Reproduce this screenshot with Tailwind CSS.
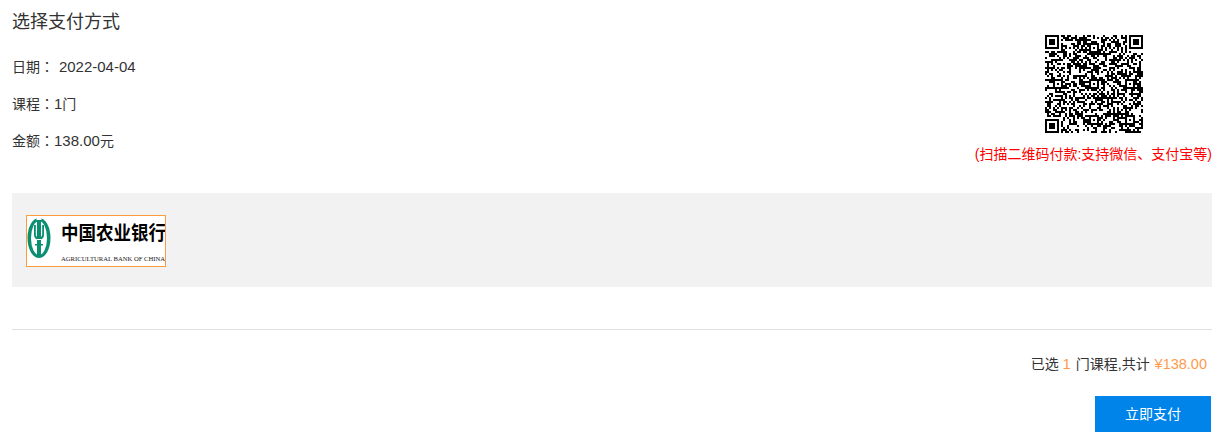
<!DOCTYPE html>
<html lang="zh-CN">
<head>
    <meta charset="UTF-8">
    <title>选择支付方式</title>
    <script src="https://cdn.jsdelivr.net/npm/@tailwindcss/browser@4"></script>
</head>
<body class="bg-white text-[#333] text-sm font-['Liberation_Sans','Noto_Sans_CJK_SC',sans-serif] overflow-hidden">
    <div class="w-[1200px] ml-3">
        <div class="flex justify-between h-[193px]">
            <div>
                <h2 class="text-lg leading-[26px] mt-[9px] mb-[21px]">选择支付方式</h2>
                <p class="h-5 leading-5 mb-[17px]">日期<span lang="zh-TW" class="font-['Noto_Sans_CJK_TC']">：</span> <span class="text-[15px] leading-none ml-px">2022-04-04</span></p>
                <p class="h-5 leading-5 mb-[17px]">课程<span lang="zh-TW" class="font-['Noto_Sans_CJK_TC']">：</span><span class="text-[15px] leading-none">1</span>门</p>
                <p class="h-5 leading-5">金额<span lang="zh-TW" class="font-['Noto_Sans_CJK_TC']">：</span><span class="text-[15px] leading-none">138.00</span>元</p>
            </div>
            <div class="flex flex-col items-center">
                <svg id="qr" class="w-[98px] h-[98px] mt-[35px] ml-px" viewBox="0 0 49 49" shape-rendering="crispEdges"></svg>
                <p class="text-[#f00] leading-5 mt-[11px] whitespace-nowrap">(扫描二维码付款:支持微信、支付宝等)</p>
            </div>
        </div>

        <div class="bg-[#f2f2f2] h-[94px] flex items-center pl-[14px] pt-[2px]">
            <div class="w-[140px] h-[52px] bg-white border border-[#ff9a3d] flex items-start overflow-hidden">
                <svg class="w-6 h-10 mt-[2px] shrink-0" viewBox="0 0 24 40">
                    <ellipse cx="12" cy="20" rx="11.5" ry="20" fill="#0a8f72"/>
                    <ellipse cx="12" cy="20" rx="8" ry="17" fill="#fff"/>
                    <path d="M9.5 0h5v2h-5z" fill="#fff"/>
                    <path d="M7 7h1.8v9a3 3 0 0 0 6.4 0V7H17v10a5 5 0 0 1-10 0z" fill="#0a8f72"/>
                    <rect x="10" y="2" width="4" height="36" fill="#0a8f72"/>
                    <rect x="10" y="21" width="4" height="1" fill="#fff"/>
                    <rect x="8" y="26" width="8" height="1.5" fill="#0a8f72"/>
                </svg>
                <div class="ml-[10px] shrink-0 w-[104px]">
                    <div class="text-[17.5px] leading-[22px] mt-[5px] font-bold text-black whitespace-nowrap scale-y-110 font-['Noto_Sans_CJK_SC',sans-serif]">中国农业银行</div>
                    <div class="text-[6.65px] leading-[9px] mt-[11px] text-[#222] whitespace-nowrap font-['Liberation_Serif',serif]">AGRICULTURAL BANK OF CHINA</div>
                </div>
            </div>
        </div>

        <div class="h-[45px] box-content border-t border-[#e0e0e0] mt-[42px] pt-[24px] text-right pr-[5px] leading-5">
            已选 <span class="text-[#ff9a4d] text-[15px] leading-none mr-px">1</span> 门课程,共计 <span class="text-[#ff9a4d] text-[14.5px] leading-none ml-px">¥138.00</span>
        </div>
        <div class="flex justify-end -mt-[3px] pr-px">
            <button class="w-[116px] h-9 bg-[#0084e9] text-white text-sm">立即支付</button>
        </div>
    </div>

    <script>
    // QR modules: fixed patterns plus seeded noise
    var size = 49, cells = [], seed = 20220404;
    function rnd() {
        seed = (seed * 1664525 + 1013904223) % 4294967296;
        return seed / 4294967296;
    }
    for (var y = 0; y < size; y++) {
        cells[y] = [];
        for (var x = 0; x < size; x++) {
            cells[y][x] = rnd() < 0.5;
            if (y == 6 || x == 6) cells[y][x] = (x + y) % 2 == 0;
        }
    }
    function finder(ox, oy) {
        for (var y = -1; y < 8; y++) {
            for (var x = -1; x < 8; x++) {
                if (ox + x < 0 || oy + y < 0 || ox + x >= size || oy + y >= size) continue;
                var ring = x == 0 || x == 6 || y == 0 || y == 6;
                var core = x >= 2 && x <= 4 && y >= 2 && y <= 4;
                var inside = x >= 0 && x <= 6 && y >= 0 && y <= 6;
                cells[oy + y][ox + x] = inside && (ring || core);
            }
        }
    }
    function align(cx, cy) {
        for (var y = -2; y <= 2; y++) {
            for (var x = -2; x <= 2; x++) {
                cells[cy + y][cx + x] = Math.max(Math.abs(x), Math.abs(y)) != 1;
            }
        }
    }
    finder(0, 0); finder(42, 0); finder(0, 42);
    [[24, 6], [6, 24], [24, 24], [42, 24], [24, 42], [42, 42]].forEach(function (p) { align(p[0], p[1]); });
    var d = '';
    for (var y = 0; y < size; y++) {
        for (var x = 0; x < size; x++) {
            if (cells[y][x]) d += 'M' + x + ' ' + y + 'h1v1h-1z';
        }
    }
    document.getElementById('qr').innerHTML = '<path fill="#000" d="' + d + '"/>';
    </script>
</body>
</html>
